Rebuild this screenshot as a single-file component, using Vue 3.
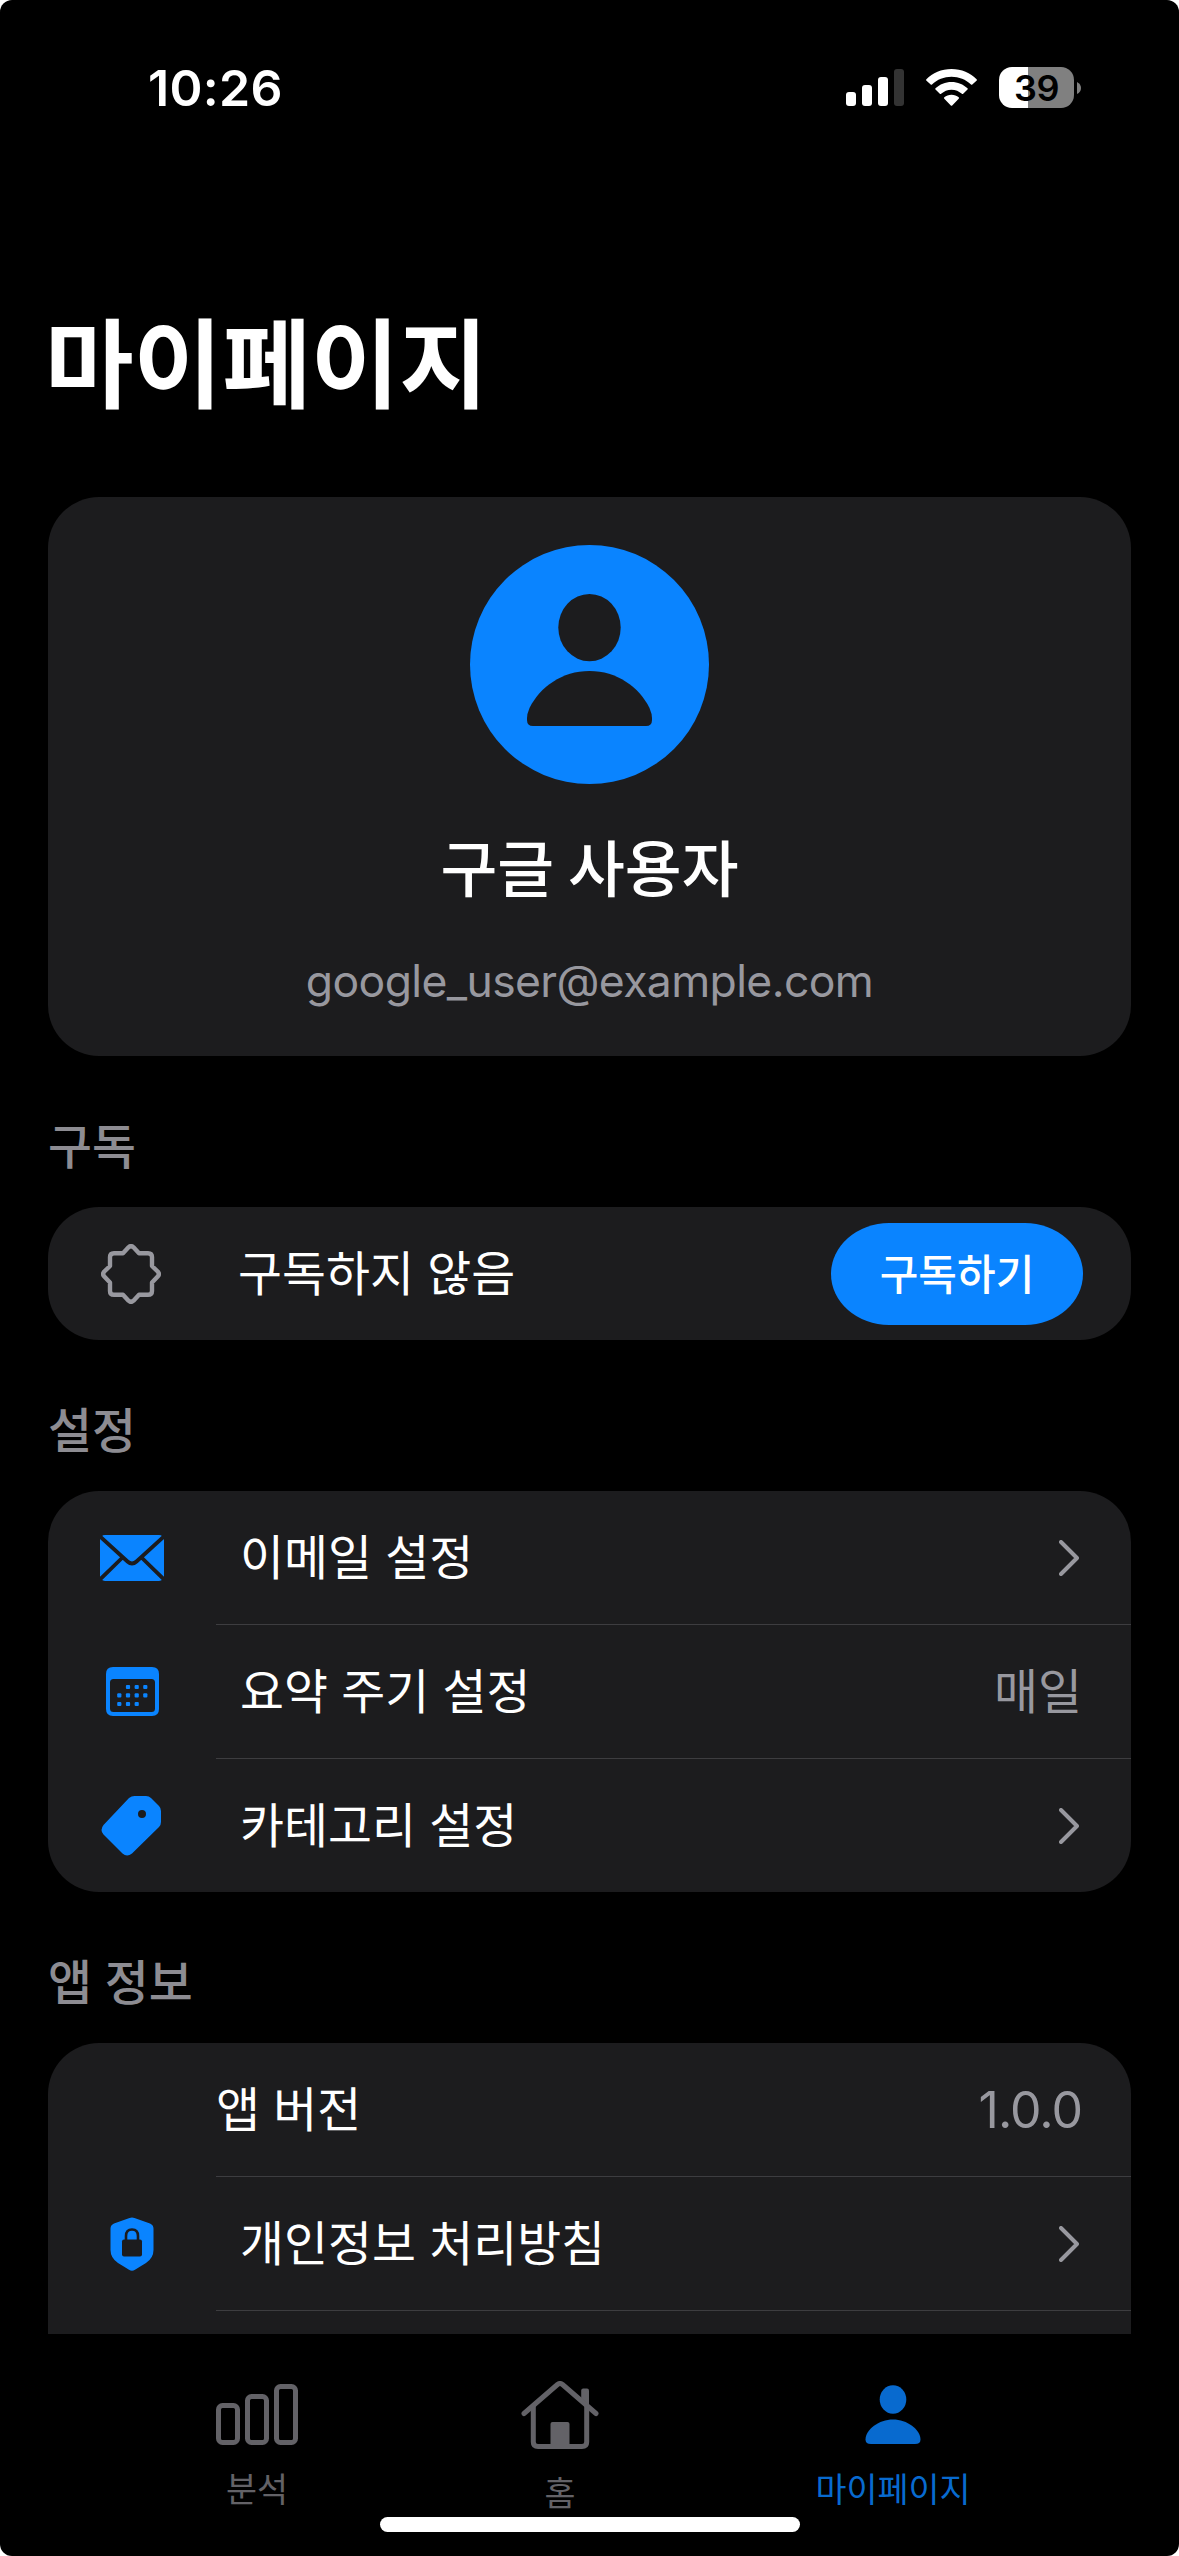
<script setup>
const settings = [
  { icon: 'mail', label: '이메일 설정' },
  { icon: 'calendar', label: '요약 주기 설정', value: '매일' },
  { icon: 'tag', label: '카테고리 설정' },
]
const dots = [
  [22, 20], [30.7, 20], [39.3, 20],
  [13.3, 28.3], [22, 28.3], [30.7, 28.3], [39.3, 28.3],
  [13.3, 37], [22, 37], [30.7, 37],
]
</script>

<template>
  <div class="screen">
    <header class="status">
      <span class="time">10:26</span>
      <div class="indicators">
        <svg class="signal" width="58" height="37" viewBox="0 0 58 37" fill="#fff">
          <rect x="0" y="23" width="10" height="14" rx="3" />
          <rect x="16" y="16" width="10" height="21" rx="3" />
          <rect x="32" y="8" width="10" height="29" rx="3" />
          <rect x="48" y="0" width="10" height="37" rx="3" fill="#333" />
        </svg>
        <svg class="wifi" width="51" height="38" viewBox="0 0 51 38" fill="#fff">
          <path d="M25.5 0C35.500 0 44.500 4 50.600 10.300Q51.200 11 50.500 11.700L46.300 15.500Q45.700 16 45 15.400C39.800 10.600 33 7.800 25.500 7.800S11.200 10.600 6 15.400Q5.300 16 4.700 15.500L.500 11.700Q-.200 11 .400 10.300C6.500 4 15.500 0 25.500 0Z" />
          <path d="M25.500 12.900C31.700 12.900 37.300 15.200 41.500 19.200Q42.200 19.900 41.500 20.600L37.200 24.800Q36.600 25.400 35.900 24.800C33.100 22.300 29.500 20.700 25.500 20.700S17.900 22.300 15.100 24.800Q14.400 25.400 13.800 24.800L9.500 20.600Q8.800 19.900 9.500 19.200C13.700 15.200 19.300 12.900 25.500 12.900Z" />
          <path d="M25.500 25.700C28.300 25.700 30.800 26.700 32.700 28.300Q33.400 29 32.700 29.700L26.200 36.500Q25.500 37.200 24.800 36.500L18.300 29.700Q17.600 29 18.300 28.300C20.200 26.700 22.700 25.700 25.500 25.700Z" />
        </svg>
        <div class="battery"><span>39</span></div>
        <svg class="nub" width="4" height="12" viewBox="0 0 4 12"><path d="M0 0Q4 2 4 6T0 12Z" fill="#808080" /></svg>
      </div>
    </header>

    <main class="content">
      <h1 class="title">마이페이지</h1>

      <section class="card profile">
        <svg class="avatar" width="239" height="239" viewBox="0 0 239 239">
          <circle cx="119.500" cy="119.500" r="119.500" fill="#0a84ff" />
          <ellipse cx="119.500" cy="82.600" rx="31.200" ry="33.600" fill="#1c1c1e" />
          <path d="M119.500 126C147 126 169 142 179.500 163Q182 169 182 173V175Q182 181 176 181H63Q57 181 57 175V173Q57 169 59.500 163C70 142 92 126 119.500 126Z" fill="#1c1c1e" />
        </svg>
        <h2 class="name">구글 사용자</h2>
        <p class="email">google_user@example.com</p>
      </section>

      <h3 class="heading">구독</h3>
      <section class="card">
        <div class="row">
          <span class="icon badge">
            <svg width="60" height="60" viewBox="-30 -30 60 60" fill="none" stroke="#98989f" stroke-width="4.400" stroke-linejoin="round">
              <path d="M-2.500 -26.700Q0 -29 2.500 -26.700L8 -20.800H17Q21 -20.800 21 -17V-8L26.700 -2.500Q29 0 26.700 2.500L21 8.500V17Q21 20.800 17 20.800H8L2.500 26.700Q0 29 -2.500 26.700L-8 20.800H-17Q-21 20.800 -21 17V8.500L-26.700 2.500Q-29 0 -26.700 -2.500L-21 -8V-17Q-21 -20.800 -17 -20.800H-8Z" />
            </svg>
          </span>
          <span class="label">구독하지 않음</span>
          <button class="subscribe">구독하기</button>
        </div>
      </section>

      <h3 class="heading">설정</h3>
      <section class="card">
        <div v-for="item in settings" :key="item.label" class="row lined">
          <span class="icon" :class="item.icon">
            <svg v-if="item.icon === 'mail'" width="64" height="46" viewBox="0 0 64 46">
              <rect width="64" height="46" rx="5" fill="#0a84ff" />
              <path d="M-1 .500L27.500 26.500Q32 30.500 36.500 26.500L65 .500M-1 45.500L22.500 22.500M65 45.500L41.500 22.500" fill="none" stroke="#1c1c1e" stroke-width="3.800" />
            </svg>
            <svg v-else-if="item.icon === 'calendar'" width="53" height="49" viewBox="0 0 53 49" fill="#0a84ff">
              <path fill-rule="evenodd" d="M7 0H46Q53 0 53 7V42Q53 49 46 49H7Q0 49 0 42V7Q0 0 7 0ZM7.500 12Q4 12 4 15.500V41.500Q4 45 7.500 45H45.500Q49 45 49 41.500V15.500Q49 12 45.500 12Z" />
              <rect v-for="(d, i) in dots" :key="i" :x="d[0] - 2.100" :y="d[1] - 2.100" width="4.200" height="4.200" rx="1" />
            </svg>
            <svg v-else width="60" height="60" viewBox="0 0 60 60">
              <path fill="#0a84ff" fill-rule="evenodd" d="M28 2Q30.500 0 33.500 0H45Q48 0 50 2L58 10Q60 12 60 15V26Q60 29 58 31L31 57.500Q26 61.500 21.500 57.500L2.500 38.500Q-1.500 34 2.500 29ZM41 14A4 4 0 1 0 41 22A4 4 0 1 0 41 14Z" />
            </svg>
          </span>
          <span class="label inset">{{ item.label }}</span>
          <span v-if="item.value" class="value">{{ item.value }}</span>
          <svg v-else class="chevron" width="20" height="36" viewBox="0 0 20 36"><path d="M2 2L18 18L2 34" /></svg>
        </div>
      </section>

      <h3 class="heading">앱 정보</h3>
      <section class="card clipped">
        <div class="row lined">
          <span class="label plain">앱 버전</span>
          <span class="value version">1.0.0</span>
        </div>
        <div class="row lined">
          <span class="icon">
            <svg width="44" height="54" viewBox="0 0 44 54">
              <path fill="#0a84ff" d="M19.500 1Q22 0 24.500 1L40 6.500Q43.500 8 43.500 11.500V33Q43.500 41 36 46Q31 49 25 52.800Q22 54.500 19 52.800Q13 49 8 46Q.500 41 .500 33V11.500Q.500 8 4 6.500Z" />
              <rect x="12" y="22.500" width="20" height="17" rx="2" fill="#1c1c1e" />
              <path d="M16 24V19Q16 12.500 22 12.500T28 19V24" fill="none" stroke="#1c1c1e" stroke-width="2.600" />
            </svg>
          </span>
          <span class="label inset">개인정보 처리방침</span>
          <svg class="chevron" width="20" height="36" viewBox="0 0 20 36"><path d="M2 2L18 18L2 34" /></svg>
        </div>
        <div class="row lined"></div>
      </section>
    </main>

    <nav class="tabs">
      <div class="tab">
        <svg width="82" height="68" viewBox="0 0 82 68" fill="none" stroke="#636267" stroke-width="5">
          <rect x="2.500" y="24.500" width="19" height="37" rx="4" />
          <rect x="31.500" y="15.500" width="19" height="46" rx="4" />
          <rect x="60.500" y="5.500" width="19" height="56" rx="4" />
        </svg>
        <span>분석</span>
      </div>
      <div class="tab home">
        <svg width="78" height="68" viewBox="0 0 78 68" fill="none" stroke="#636267" stroke-width="5" stroke-linecap="round" stroke-linejoin="round">
          <path d="M3 32.500L36.500 3.500Q39 1.500 41.500 3.500L75 32.500" />
          <path d="M12.300 25V61Q12.300 65.500 17 65.500H61Q65.700 65.500 65.700 61V25" stroke-linecap="butt" />
          <path d="M60.200 17V9.500Q60.200 7.500 62.200 7.500H66Q68 7.500 68 9.500V24Z" fill="#636267" stroke="none" />
          <path d="M29.500 66V43Q29.500 41 31.500 41H46.500Q48.500 41 48.500 43V66Z" fill="#636267" stroke="none" />
        </svg>
        <span>홈</span>
      </div>
      <div class="tab active">
        <svg width="56" height="68" viewBox="0 0 56 68" fill="#086acf">
          <ellipse cx="28" cy="18.500" rx="13.300" ry="14.300" />
          <path d="M28 38.500C42 38.500 55.500 48.500 55.500 58.500Q55.500 63 50 63H6Q.500 63 .500 58.500C.500 48.500 14 38.500 28 38.500Z" />
        </svg>
        <span>마이페이지</span>
      </div>
      <div class="home-indicator"></div>
    </nav>
  </div>
</template>

<style>
body { background: #fff; }
</style>

<style scoped>
.screen {
  display: flex;
  flex-direction: column;
  width: 1179px;
  height: 2556px;
  box-sizing: border-box;
  overflow: hidden;
  border-radius: 12px;
  background: #000;
  color: #fff;
  font-family: "Noto Sans CJK KR", "Inter", sans-serif;
}
h1, h2, h3, p { margin: 0; }
svg { display: block; flex: none; }
.status {
  display: flex;
  justify-content: space-between;
  height: 176px;
  flex: none;
  padding: 0 98px 0 148px;
  box-sizing: border-box;
}
.time {
  font: 600 50px/60px Inter, sans-serif;
  letter-spacing: 0.300px;
  margin-top: 58px;
}
.indicators { display: flex; align-items: flex-start; }
.signal { margin-top: 69px; }
.wifi { margin: 69px 0 0 22px; }
.battery {
  width: 75px;
  height: 41px;
  margin: 67px 0 0 22px;
  border-radius: 13px;
  background: linear-gradient(90deg, #fff 29px, #808080 29px);
  color: #000;
  font: 600 36px/42px Inter, sans-serif;
  letter-spacing: -0.500px;
  text-align: center;
}
.nub { margin: 82px 0 0 3px; }
.content {
  display: flex;
  flex-direction: column;
  height: 2158px;
  flex: none;
  padding: 0 48px;
  overflow: hidden;
}
.title {
  flex: none;
  height: 321px;
  margin-left: -3px;
  font-size: 96.300px;
  font-weight: 700;
  line-height: 120px;
  padding-top: 122px;
  box-sizing: border-box;
}
.card {
  flex: none;
  border-radius: 51px;
  background: #1c1c1e;
  overflow: hidden;
}
.profile {
  display: flex;
  flex-direction: column;
  align-items: center;
  height: 559px;
}
.avatar { margin-top: 48px; }
.name {
  margin-top: 36px;
  font-size: 61.800px;
  font-weight: 500;
  line-height: 90px;
}
.email {
  margin-top: 41px;
  color: #98989f;
  font: 400 44.500px/60px Inter, sans-serif;
  letter-spacing: -0.620px;
}
.heading {
  flex: none;
  height: 151px;
  box-sizing: border-box;
  padding-top: 53px;
  color: #8d8c92;
  font-size: 47.800px;
  font-weight: 500;
  line-height: 70px;
  word-spacing: 2px;
}
.row {
  position: relative;
  display: flex;
  align-items: center;
  height: 133px;
  padding-right: 48px;
}
.row + .row { margin-top: 1px; }
.row.lined + .row.lined::before {
  content: "";
  position: absolute;
  top: -1px;
  left: 168px;
  right: 0;
  height: 1px;
  background: #3d3d40;
}
.icon {
  display: flex;
  justify-content: center;
  width: 168px;
  flex: none;
}
.icon.badge, .icon.tag {
  box-sizing: border-box;
  padding-right: 2px;
}
.label {
  flex: 1;
  padding: 0 0 6px 22px;
  font-size: 47.800px;
  line-height: 70px;
  white-space: nowrap;
  word-spacing: 2.600px;
}
.label.inset { padding-left: 24px; }
.label.plain { padding-left: 168px; }
.value {
  padding: 0 1px 6px 0;
  color: #98989f;
  font-size: 47.800px;
  line-height: 70px;
}
.version {
  padding-bottom: 0;
  font-family: Inter, sans-serif;
  font-size: 50px;
  letter-spacing: -1px;
}
.chevron { margin-right: 4px; }
.chevron path {
  fill: none;
  stroke: #98989f;
  stroke-width: 4;
  stroke-linecap: round;
  stroke-linejoin: round;
}
.subscribe {
  width: 252px;
  height: 102px;
  padding: 0 0 4px;
  border: 0;
  border-radius: 58px / 51px;
  background: #0a84ff;
  color: #fff;
  font: 500 42px/60px "Noto Sans CJK KR", sans-serif;
}
.clipped { border-radius: 51px 51px 0 0; }
.tabs {
  position: relative;
  display: flex;
  height: 222px;
  flex: none;
}
.tab {
  display: flex;
  flex-direction: column;
  align-items: center;
  width: 200px;
  margin-left: 157px;
  padding-top: 47px;
  color: #636267;
  font-size: 33.700px;
  line-height: 48px;
}
.tab span { margin-top: 15px; }
.tab + .tab { margin-left: 103px; }
.tab.active { margin-left: 133px; color: #086acf; }
.tab.home span { margin-top: 19px; }
.home-indicator {
  position: absolute;
  left: 380px;
  top: 183px;
  width: 420px;
  height: 15px;
  border-radius: 8px;
  background: #fff;
}
</style>
